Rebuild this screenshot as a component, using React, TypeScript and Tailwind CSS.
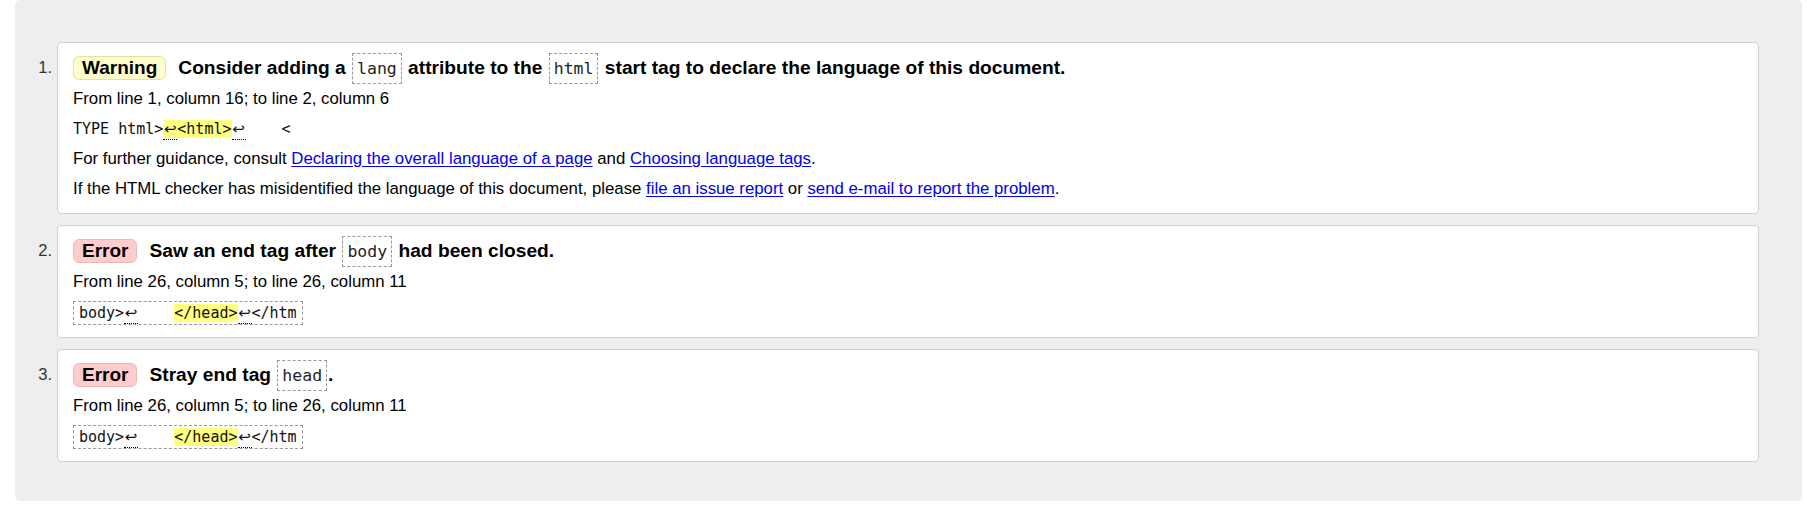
import React from 'react';

type Kind = 'Warning' | 'Error';

function Badge({ kind }: { kind: Kind }) {
  return kind === 'Warning' ? (
    <span className="inline-block shrink-0 rounded-[6px] border border-[#e3e3a8] bg-[#ffffcc] px-[8px] text-[19px] font-bold leading-[22px]">
      Warning
    </span>
  ) : (
    <span className="inline-block shrink-0 rounded-[6px] border border-[#e9b9b9] bg-[#ffcccc] px-[8px] text-[19px] font-bold leading-[22px]">
      Error
    </span>
  );
}

// code word inside the heading, in a dashed box
function Tag({ children }: { children: React.ReactNode }) {
  return (
    <code className="mx-[1px] inline-block border border-dashed border-[#999999] px-[4px] py-[3px] font-['DejaVu_Sans_Mono',monospace] text-[16.5px] font-normal leading-[23px] text-[#222]">
      {children}
    </code>
  );
}

function Ret() {
  return (
    <span className="inline-block w-[14px] border-b border-dotted border-black text-center font-['DejaVu_Sans',sans-serif] text-[15px] leading-[20px]">
      ↩
    </span>
  );
}

function Hl({ children }: { children: React.ReactNode }) {
  return <span className="bg-[#ffff80]">{children}</span>;
}

function A({ children }: { children: React.ReactNode }) {
  return (
    <a href="#" className="text-[#0000ee] underline underline-offset-[2px]">
      {children}
    </a>
  );
}

function Item({ n, children }: { n: number; children: React.ReactNode }) {
  return (
    <li className="flex">
      <span className="mt-[10px] w-[42px] shrink-0 pr-[5px] text-right text-[16.5px] leading-[31px] text-[#333]">
        {n}.
      </span>
      <div className="flex-1 rounded-[4px] border border-[#cfcfcf] bg-white px-[15px] pt-[9px] pb-[12px]">
        {children}
      </div>
    </li>
  );
}

function Heading({ kind, children }: { kind: Kind; children: React.ReactNode }) {
  return (
    <div className="flex h-[31px] items-center gap-[12px] whitespace-nowrap">
      <Badge kind={kind} />
      <p className="text-[19.2px] font-bold leading-[31px] text-black">{children}</p>
    </div>
  );
}

function Extract() {
  return (
    <p className="mt-[8px] leading-[22px]">
      <code className="inline-block whitespace-pre border border-dashed border-[#999999] px-[5px] font-['DejaVu_Sans_Mono',monospace] text-[15px] leading-[22px] text-[#111]">
        {'body>'}
        <Ret />
        {'    '}
        <Hl>{'</head>'}</Hl>
        <Ret />
        {'</htm'}
      </code>
    </p>
  );
}

export default function App() {
  return (
    <div className="min-h-screen bg-white font-['Liberation_Sans',Arial,sans-serif] text-black">
      <div className="ml-[15px] w-[1787px] rounded-[5px] bg-[#eeeeee] pt-[42px] pr-[43px] pb-[39px]">
        <ol className="flex flex-col gap-[11px]">
          <Item n={1}>
            <Heading kind="Warning">
              Consider adding a <Tag>lang</Tag> attribute to the <Tag>html</Tag> start tag to
              declare the language of this document.
            </Heading>
            <p className="mt-[5px] text-[16.8px] leading-[22px]">
              From line 1, column 16; to line 2, column 6
            </p>
            <p className="mt-[8px] whitespace-pre font-['DejaVu_Sans_Mono',monospace] text-[15px] leading-[22px] text-[#111]">
              {'TYPE html>'}
              <Hl>
                <Ret />
                {'<html>'}
              </Hl>
              <Ret />
              {'    <'}
            </p>
            <p className="mt-[8px] text-[16.8px] leading-[22px]">
              For further guidance, consult <A>Declaring the overall language of a page</A> and{' '}
              <A>Choosing language tags</A>.
            </p>
            <p className="mt-[8px] pb-[1px] text-[16.8px] leading-[22px]">
              If the HTML checker has misidentified the language of this document, please{' '}
              <A>file an issue report</A> or <A>send e-mail to report the problem</A>.
            </p>
          </Item>
          <Item n={2}>
            <Heading kind="Error">
              Saw an end tag after <Tag>body</Tag> had been closed.
            </Heading>
            <p className="mt-[5px] text-[16.8px] leading-[22px]">
              From line 26, column 5; to line 26, column 11
            </p>
            <Extract />
          </Item>
          <Item n={3}>
            <Heading kind="Error">
              Stray end tag <Tag>head</Tag>.
            </Heading>
            <p className="mt-[5px] text-[16.8px] leading-[22px]">
              From line 26, column 5; to line 26, column 11
            </p>
            <Extract />
          </Item>
        </ol>
      </div>
    </div>
  );
}
